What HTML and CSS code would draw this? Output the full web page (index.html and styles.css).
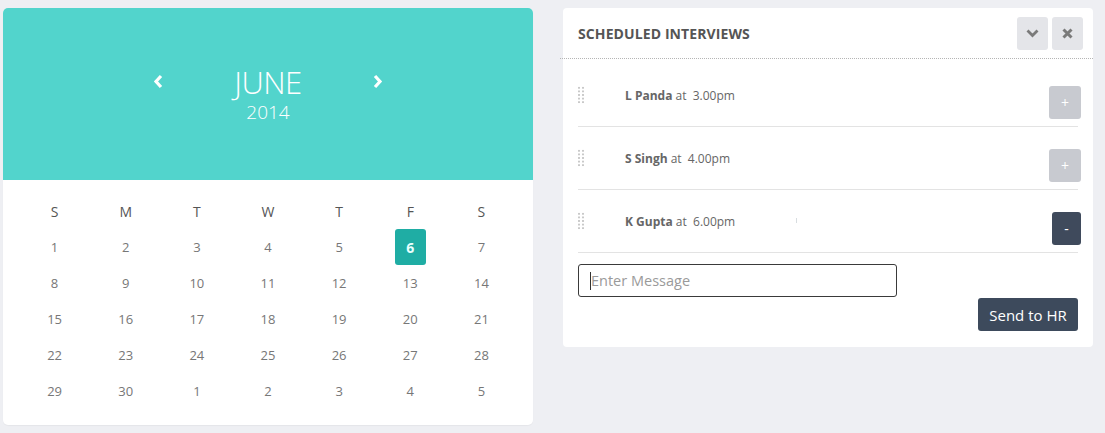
FILE: index.html
```html
<!DOCTYPE html>
<html>
<head>
<meta charset="utf-8">
<link rel="stylesheet" href="styles.css">
</head>
<body>
<div class="page">
  <div class="calendar">
    <div class="cal-head">
      <button class="nav prev" aria-label="Previous">
        <svg width="11" height="15" viewBox="0 0 11 15"><polyline points="8,2 3,7.5 8,13" fill="none" stroke="#fff" stroke-width="3.2"/></svg>
      </button>
      <div class="month">
        <div class="month-name">JUNE</div>
        <div class="year">2014</div>
      </div>
      <button class="nav next" aria-label="Next">
        <svg width="11" height="15" viewBox="0 0 11 15"><polyline points="3,2 8,7.5 3,13" fill="none" stroke="#fff" stroke-width="3.2"/></svg>
      </button>
    </div>
    <div class="cal-body">
      <div class="grid">
        <div class="wd">S</div><div class="wd">M</div><div class="wd">T</div><div class="wd">W</div><div class="wd">T</div><div class="wd">F</div><div class="wd">S</div>
        <div class="d"><span>1</span></div><div class="d"><span>2</span></div><div class="d"><span>3</span></div><div class="d"><span>4</span></div><div class="d"><span>5</span></div><div class="d"><span class="today">6</span></div><div class="d"><span>7</span></div>
        <div class="d"><span>8</span></div><div class="d"><span>9</span></div><div class="d"><span>10</span></div><div class="d"><span>11</span></div><div class="d"><span>12</span></div><div class="d"><span>13</span></div><div class="d"><span>14</span></div>
        <div class="d"><span>15</span></div><div class="d"><span>16</span></div><div class="d"><span>17</span></div><div class="d"><span>18</span></div><div class="d"><span>19</span></div><div class="d"><span>20</span></div><div class="d"><span>21</span></div>
        <div class="d"><span>22</span></div><div class="d"><span>23</span></div><div class="d"><span>24</span></div><div class="d"><span>25</span></div><div class="d"><span>26</span></div><div class="d"><span>27</span></div><div class="d"><span>28</span></div>
        <div class="d"><span>29</span></div><div class="d"><span>30</span></div><div class="d"><span>1</span></div><div class="d"><span>2</span></div><div class="d"><span>3</span></div><div class="d"><span>4</span></div><div class="d"><span>5</span></div>
      </div>
    </div>
  </div>

  <div class="panel">
    <div class="panel-head">
      <div class="panel-title">SCHEDULED INTERVIEWS</div>
      <div class="tools">
        <button class="tool" aria-label="Collapse">
          <svg width="13" height="9" viewBox="0 0 13 9"><polyline points="1.5,1.5 6.5,6.5 11.5,1.5" fill="none" stroke="#7a7a7a" stroke-width="2.8"/></svg>
        </button>
        <button class="tool" aria-label="Close">
          <svg width="11" height="11" viewBox="0 0 11 11"><path d="M1.5 1.5 L9.5 9.5 M9.5 1.5 L1.5 9.5" stroke="#7a7a7a" stroke-width="3" fill="none"/></svg>
        </button>
      </div>
    </div>
    <ul class="list">
      <li class="item">
        <span class="grip"></span>
        <span class="text"><b>L Panda</b> at&nbsp; 3.00pm</span>
        <button class="act add">+</button>
      </li>
      <li class="item">
        <span class="grip"></span>
        <span class="text"><b>S Singh</b> at&nbsp; 4.00pm</span>
        <button class="act add">+</button>
      </li>
      <li class="item">
        <span class="grip"></span>
        <span class="text"><b>K Gupta</b> at&nbsp; 6.00pm<span class="tick"></span></span>
        <button class="act remove">-</button>
      </li>
    </ul>
    <div class="compose">
      <div class="field">
        <input class="msg" type="text" placeholder="Enter Message">
        <span class="caret"></span>
      </div>
      <div class="send-row">
        <button class="send">Send to HR</button>
      </div>
    </div>
  </div>
</div>
</body>
</html>
```

FILE: styles.css
```css
* { box-sizing: border-box; }

html, body {
  margin: 0;
  padding: 0;
}

body {
  background: #eeeff3;
  font-family: "Open Sans", "Liberation Sans", sans-serif;
  width: 1105px;
  height: 433px;
  overflow: hidden;
}

.page {
  display: flex;
  align-items: flex-start;
  gap: 30px;
  padding: 8px 0 0 3px;
}

/* Calendar */
.calendar {
  width: 530px;
  background: #fff;
  border-radius: 5px;
  overflow: hidden;
  box-shadow: 0 1px 1px rgba(0,0,0,0.04);
}

.cal-head {
  height: 172px;
  background: #52d4cc;
  display: flex;
  align-items: center;
  justify-content: center;
  padding-bottom: 1px;
}

.nav {
  background: none;
  border: 0;
  padding: 0;
  width: 11px;
  height: 15px;
  display: flex;
  cursor: pointer;
  margin-top: -24px;
}

.month {
  width: 208px;
  text-align: center;
  color: #fff;
}

.month-name {
  font-weight: 300;
  font-size: 31px;
  line-height: 36px;
  letter-spacing: -0.5px;
}

.year {
  font-weight: 300;
  font-size: 19px;
  line-height: 24px;
  margin-top: 0;
}

.cal-body {
  padding: 13px 16px 16px 16px;
}

.grid {
  display: grid;
  grid-template-columns: repeat(7, 1fr);
  grid-auto-rows: 36px;
}

.wd {
  display: flex;
  align-items: center;
  justify-content: center;
  font-size: 14px;
  color: #555;
}

.d {
  display: flex;
  align-items: center;
  justify-content: center;
  font-size: 13px;
  color: #777;
}

.d span {
  display: flex;
  align-items: center;
  justify-content: center;
  width: 31px;
  height: 36px;
  border-radius: 3px;
}

.d .today {
  background: #1fada4;
  color: #e9fffd;
  font-weight: 700;
  font-size: 14px;
}

/* Panel */
.panel {
  width: 530px;
  background: #fff;
  border-radius: 4px;
  padding-bottom: 16px;
}

.panel-head {
  height: 51px;
  display: flex;
  align-items: center;
  justify-content: space-between;
  padding: 0 10px 0 18px;
  border-bottom: 1px dotted #b5b5b5;
  margin-left: -3px;
}

.panel-title {
  font-weight: 700;
  font-size: 14px;
  color: #555;
  letter-spacing: 0.1px;
}

.tools {
  display: flex;
  gap: 4px;
}

.tool {
  width: 31px;
  height: 33px;
  background: #e4e5e9;
  border: 0;
  border-radius: 3px;
  display: flex;
  align-items: center;
  justify-content: center;
  padding: 0;
}

.list {
  list-style: none;
  margin: 0;
  padding: 5px 15px 0 15px;
}

.item {
  height: 63px;
  border-bottom: 1px solid #e3e3e3;
  display: flex;
  align-items: flex-start;
}

.grip {
  width: 8px;
  height: 18px;
  margin-top: 22px;
  margin-left: -1px;
  background-image: radial-gradient(circle, #c9c9c9 0.9px, transparent 1.1px);
  background-size: 4px 3.6px;
}

.text {
  margin-left: 40px;
  margin-top: 23px;
  font-size: 12px;
  color: #666;
  line-height: 18px;
  flex: 1;
  position: relative;
}

.text b {
  font-weight: 700;
  color: #666;
}

.tick {
  position: absolute;
  left: 171px;
  top: 5px;
  width: 1px;
  height: 5px;
  background: #d8dde0;
}

.act {
  margin-top: 22px;
  margin-right: -3px;
  width: 32px;
  height: 33px;
  border: 0;
  border-radius: 3px;
  color: #fff;
  font-family: "Open Sans", "Liberation Sans", sans-serif;
  font-size: 14px;
  padding: 0;
}

.add {
  background: #c8cad0;
}

.remove {
  background: #3f4a5c;
  width: 29px;
}

.compose {
  padding: 11px 15px 0 15px;
}

.field {
  position: relative;
  width: 319px;
}

.msg {
  width: 319px;
  height: 33px;
  border: 1px solid #3a3a3a;
  border-radius: 3px;
  padding: 0 12px;
  font-family: "Open Sans", "Liberation Sans", sans-serif;
  font-size: 14.5px;
  color: #555;
  outline: none;
}

.msg::placeholder {
  color: #9a9a9a;
}

.caret {
  position: absolute;
  left: 12px;
  top: 8px;
  width: 1px;
  height: 18px;
  background: #333;
}

.send-row {
  display: flex;
  justify-content: flex-end;
  margin-top: 1px;
}

.send {
  width: 100px;
  height: 33px;
  background: #3d4a5c;
  color: #fff;
  border: 0;
  border-radius: 3px;
  font-family: "Open Sans", "Liberation Sans", sans-serif;
  font-size: 15px;
  padding: 0;
}
```
